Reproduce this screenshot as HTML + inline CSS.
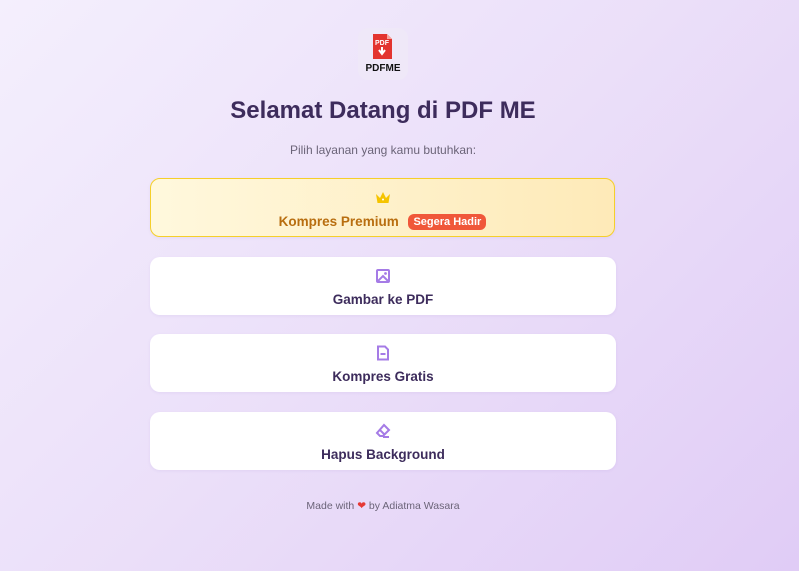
<!DOCTYPE html>
<html><head><meta charset="utf-8"><style>
*{margin:0;padding:0;box-sizing:border-box}
body{width:799px;height:571px;overflow:hidden;font-family:"Liberation Sans",sans-serif;background:linear-gradient(135deg,#f4effd 0%,#ebdff9 50%,#e0ccf6 100%);position:relative}
.logo{position:absolute;left:358px;top:28px;width:50px;height:52px;border-radius:10px;background:#efe8f8;text-align:center}
.logo .t{position:absolute;left:0;right:0;top:35px;font-size:10px;font-weight:bold;color:#111}
.c{position:absolute;left:0;width:766px;text-align:center}
h1{top:97px;font-size:24px;color:#3d2c5c;font-weight:bold}
.sub{top:143px;font-size:12px;color:#6b6478}
.card{position:absolute;left:150px;width:466px;border-radius:10px;background:#fff;text-align:center;box-shadow:0 1px 3px rgba(120,80,180,.08)}
.card .lbl{position:absolute;left:0;right:0;font-size:13.5px;font-weight:bold;color:#3d2c5c}
.card svg{position:absolute;left:225px}
.prem{background:linear-gradient(90deg,#fff8dd,#feeab8);border:1px solid #f5cf2a;width:465px}
.badge{display:inline-block;background:#f0573a;color:#fff;font-size:11px;padding:2px 5px;border-radius:6px;margin-left:6px;vertical-align:1px}
.foot{top:500px;font-size:10.5px;color:#6b6478}
</style></head><body>
<div class="logo">
<svg width="22" height="26" viewBox="0 0 22 26" style="position:absolute;left:14px;top:6px"><path d="M1 0h14l5 5v20H1z" fill="#e3342f"/><path d="M15 0v5h5z" fill="#f7a39c"/><text x="10" y="11" font-size="7" font-family="Liberation Sans" font-weight="bold" fill="#fff" text-anchor="middle">PDF</text><path d="M10 13v6M7 16l3 4 3-4" stroke="#fff" stroke-width="2" fill="none"/></svg>
<div class="t">PDFME</div></div>
<h1 class="c">Selamat Datang di PDF ME</h1>
<div class="c sub">Pilih layanan yang kamu butuhkan:</div>
<div class="card prem" style="top:178px;height:59px">
<svg width="16" height="14" viewBox="0 0 16 14" style="left:224px;top:12px"><path d="M1 3l4 4 3-6 3 6 4-4-1.5 9h-11z" fill="#f5c400"/><circle cx="8" cy="8.5" r="1" fill="#fff"/></svg>
<div class="lbl" style="top:35px;color:#b86e10">Kompres Premium <span class="badge">Segera Hadir</span></div></div>
<div class="card" style="top:257px;height:58px">
<svg width="16" height="16" viewBox="0 0 16 16" style="top:11px"><rect x="2" y="2" width="12" height="12" rx="1" fill="none" stroke="#a57be6" stroke-width="2"/><path d="M2 14l6-6 6 6" fill="none" stroke="#a57be6" stroke-width="2"/><circle cx="10.5" cy="5.5" r="1.4" fill="#a57be6"/></svg>
<div class="lbl" style="top:35px">Gambar ke PDF</div></div>
<div class="card" style="top:334px;height:58px">
<svg width="16" height="16" viewBox="0 0 16 16" style="top:11px"><path d="M3 1.5h7l3 3v10H3z" fill="none" stroke="#a57be6" stroke-width="2"/><path d="M5.5 9h5" stroke="#a57be6" stroke-width="2"/></svg>
<div class="lbl" style="top:35px">Kompres Gratis</div></div>
<div class="card" style="top:412px;height:58px">
<svg width="16" height="16" viewBox="0 0 16 16" style="top:11px"><path d="M9 2l5 5-6 6H5L2 10z" fill="none" stroke="#a57be6" stroke-width="2"/><path d="M5 7l5 5M8 14h6" stroke="#a57be6" stroke-width="2"/></svg>
<div class="lbl" style="top:35px">Hapus Background</div></div>
<div class="c foot">Made with <span style="color:#e53935">❤</span> by Adiatma Wasara</div>
</body></html>
